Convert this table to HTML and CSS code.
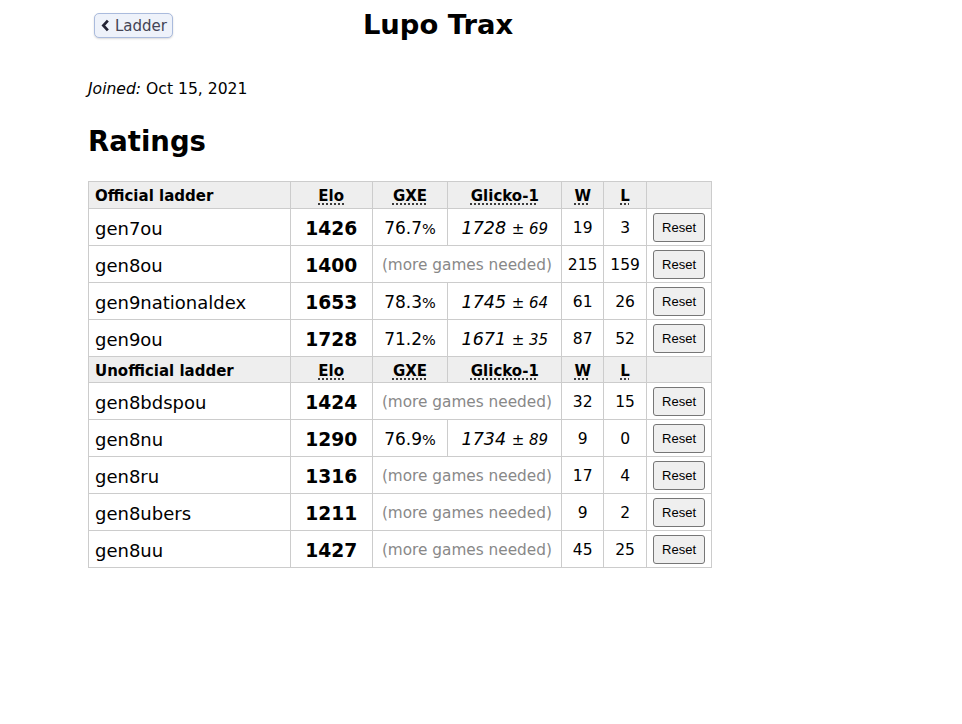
FILE: index.html
```html
<!DOCTYPE html>
<html lang="en">
<head>
    <meta charset="UTF-8">
    <meta name="viewport" content="width=device-width, initial-scale=1.0">
    <title>Lupo Trax</title>
    <link rel="stylesheet" href="styles.css">
</head>
<body>
    <div class="panel">
        <div class="topbar">
            <button class="back-button">
                <svg class="chevron" viewBox="0 0 10 14" width="9" height="13"><path d="M7.6 1.6 L2.6 7 L7.6 12.4" fill="none" stroke="#223" stroke-width="3"/></svg>
                Ladder
            </button>
            <h1 class="user-name">Lupo Trax</h1>
        </div>

        <p class="joined"><em>Joined:</em> Oct 15, 2021</p>

        <h2 class="section-title">Ratings</h2>

        <table class="ratings">
            <tr class="head-row">
                <th class="col-format">Official ladder</th>
                <th class="col-elo"><abbr>Elo</abbr></th>
                <th class="col-gxe"><abbr>GXE</abbr></th>
                <th class="col-glicko"><abbr>Glicko-1</abbr></th>
                <th class="col-w"><abbr>W</abbr></th>
                <th class="col-l"><abbr>L</abbr></th>
                <th class="col-reset"></th>
            </tr>
            <tr>
                <td class="format">gen7ou</td>
                <td class="elo">1426</td>
                <td class="gxe">76.7<small>%</small></td>
                <td class="glicko"><em>1728</em> <small>± <em>69</em></small></td>
                <td class="num">19</td>
                <td class="num">3</td>
                <td class="reset"><button class="reset-button">Reset</button></td>
            </tr>
            <tr>
                <td class="format">gen8ou</td>
                <td class="elo">1400</td>
                <td class="pending" colspan="2">(more games needed)</td>
                <td class="num">215</td>
                <td class="num">159</td>
                <td class="reset"><button class="reset-button">Reset</button></td>
            </tr>
            <tr>
                <td class="format">gen9nationaldex</td>
                <td class="elo">1653</td>
                <td class="gxe">78.3<small>%</small></td>
                <td class="glicko"><em>1745</em> <small>± <em>64</em></small></td>
                <td class="num">61</td>
                <td class="num">26</td>
                <td class="reset"><button class="reset-button">Reset</button></td>
            </tr>
            <tr>
                <td class="format">gen9ou</td>
                <td class="elo">1728</td>
                <td class="gxe">71.2<small>%</small></td>
                <td class="glicko"><em>1671</em> <small>± <em>35</em></small></td>
                <td class="num">87</td>
                <td class="num">52</td>
                <td class="reset"><button class="reset-button">Reset</button></td>
            </tr>
            <tr class="head-row sub-head">
                <th>Unofficial ladder</th>
                <th><abbr>Elo</abbr></th>
                <th><abbr>GXE</abbr></th>
                <th><abbr>Glicko-1</abbr></th>
                <th><abbr>W</abbr></th>
                <th><abbr>L</abbr></th>
                <th></th>
            </tr>
            <tr>
                <td class="format">gen8bdspou</td>
                <td class="elo">1424</td>
                <td class="pending" colspan="2">(more games needed)</td>
                <td class="num">32</td>
                <td class="num">15</td>
                <td class="reset"><button class="reset-button">Reset</button></td>
            </tr>
            <tr>
                <td class="format">gen8nu</td>
                <td class="elo">1290</td>
                <td class="gxe">76.9<small>%</small></td>
                <td class="glicko"><em>1734</em> <small>± <em>89</em></small></td>
                <td class="num">9</td>
                <td class="num">0</td>
                <td class="reset"><button class="reset-button">Reset</button></td>
            </tr>
            <tr>
                <td class="format">gen8ru</td>
                <td class="elo">1316</td>
                <td class="pending" colspan="2">(more games needed)</td>
                <td class="num">17</td>
                <td class="num">4</td>
                <td class="reset"><button class="reset-button">Reset</button></td>
            </tr>
            <tr>
                <td class="format">gen8ubers</td>
                <td class="elo">1211</td>
                <td class="pending" colspan="2">(more games needed)</td>
                <td class="num">9</td>
                <td class="num">2</td>
                <td class="reset"><button class="reset-button">Reset</button></td>
            </tr>
            <tr>
                <td class="format">gen8uu</td>
                <td class="elo">1427</td>
                <td class="pending" colspan="2">(more games needed)</td>
                <td class="num">45</td>
                <td class="num">25</td>
                <td class="reset"><button class="reset-button">Reset</button></td>
            </tr>
        </table>
    </div>
</body>
</html>
```

FILE: styles.css
```css
body {
	margin: 0;
	font-family: "DejaVu Sans", Verdana, sans-serif;
	color: #000;
	background: #fff;
}

.panel {
	width: 700px;
	margin-left: 88px;
}

.topbar {
	position: relative;
	height: 50px;
}

.back-button {
	position: absolute;
	left: 6px;
	top: 13px;
	width: 79px;
	height: 25px;
	display: flex;
	align-items: center;
	gap: 5px;
	padding: 0 0 0 6px;
	font-family: "DejaVu Sans", Verdana, sans-serif;
	font-size: 15px;
	color: #445;
	background: #eef2fa;
	border: 1px solid #aabbdd;
	border-radius: 5px;
	box-shadow: 0 1px 2px rgba(0, 0, 0, 0.15);
}

.user-name {
	margin: 0;
	padding-top: 6px;
	text-align: center;
	font-size: 27.4px;
	line-height: 38px;
	font-weight: bold;
}

.joined {
	margin: 29px 0 0;
	font-size: 15.6px;
	line-height: 20px;
}

.section-title {
	margin: 22px 0 0;
	font-size: 27.5px;
	line-height: 40px;
	font-weight: bold;
}

.ratings {
	margin-top: 20px;
	border-collapse: collapse;
	width: 624px;
}

.ratings th,
.ratings td {
	border: 1px solid #cccccc;
	padding: 0;
}

.head-row th {
	background: #eeeeee;
	height: 24px;
	padding-top: 2px;
	font-size: 15px;
	font-weight: bold;
	text-align: center;
}

.sub-head th {
	height: 23px;
}

.head-row th:first-child {
	text-align: left;
	padding-left: 6px;
}

.head-row abbr {
	text-decoration: underline dotted;
	text-underline-offset: 3px;
}

.col-format { width: 195px; }
.col-elo { width: 81px; }
.col-gxe { width: 75px; }
.col-glicko { width: 113px; }
.col-w { width: 41px; }
.col-l { width: 42px; }
.col-reset { width: 64px; }

.ratings td {
	height: 34px;
	padding-top: 2px;
	text-align: center;
}

.ratings td.format {
	text-align: left;
	padding-left: 6px;
	font-size: 18px;
}

.elo {
	font-weight: bold;
	font-size: 18.7px;
}

.gxe {
	font-size: 17px;
}

.gxe small {
	font-size: 14.5px;
}

.glicko {
	font-size: 17.5px;
}

.glicko small {
	font-size: 15px;
}

.pending {
	color: #888;
	font-size: 15.3px;
}

.num {
	font-size: 15.5px;
}

.ratings td.reset {
	padding-top: 0;
	height: 36px;
}

.reset-button {
	width: 52px;
	height: 29px;
	padding: 0;
	font-family: "Liberation Sans", Arial, sans-serif;
	font-size: 13px;
	color: #000;
	background: #efefef;
	border: 1px solid #767676;
	border-radius: 3px;
}
```
